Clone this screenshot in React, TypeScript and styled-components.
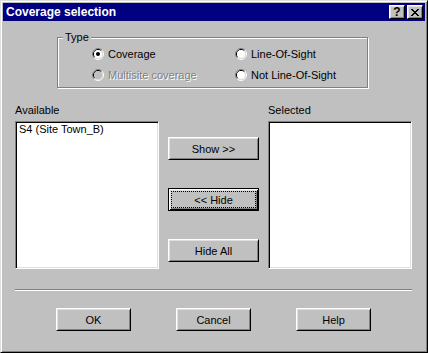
import React from 'react';
import styled, { createGlobalStyle, css } from 'styled-components';

const GlobalStyle = createGlobalStyle`
  html, body {
    margin: 0;
    padding: 0;
    background: #c0c0c0;
  }
  body {
    font-family: "Liberation Sans", Arial, sans-serif;
    font-size: 11px;
    color: #000;
  }
`;

const Window = styled.div`
  width: 428px;
  height: 353px;
  box-sizing: border-box;
  display: flex;
  flex-direction: column;
  background: #c0c0c0;
  border: 1px solid;
  border-color: #dfdfdf #000 #000 #dfdfdf;
  box-shadow: inset 1px 1px #fff, inset -1px -1px #808080;
  padding: 2px;
`;

const TitleBar = styled.div`
  height: 18px;
  display: flex;
  align-items: center;
  padding: 0 2px 0 3px;
  background: #000080;
  color: #fff;
  font-size: 12px;
  font-weight: bold;
`;

const Caption = styled.div`
  flex: 1;
  line-height: 18px;
  white-space: nowrap;
`;

const TitleButtons = styled.div`
  display: flex;
  gap: 2px;
`;

const TitleButton = styled.div`
  width: 16px;
  height: 14px;
  box-sizing: border-box;
  display: flex;
  align-items: center;
  justify-content: center;
  background: #c0c0c0;
  color: #000;
  border: 1px solid;
  border-color: #fff #000 #000 #fff;
  box-shadow: inset 1px 1px #dfdfdf, inset -1px -1px #808080;
  font-size: 12px;
  font-weight: bold;
  line-height: 1;
`;

const Body = styled.div`
  flex: 1;
  display: flex;
  flex-direction: column;
`;

const GroupBox = styled.fieldset`
  margin: 10px 0 0 54px;
  width: 311px;
  min-width: 0;
  box-sizing: border-box;
  padding: 0 0 2px;
  border: 1px solid #808080;
  box-shadow: inset 1px 1px #fff, 1px 1px #fff;
`;

const GroupTitle = styled.legend`
  margin-left: 5px;
  padding: 0 2px;
  line-height: 12px;
  background: #c0c0c0;
`;

const RadioGrid = styled.div`
  display: grid;
  grid-template-columns: 143px auto;
  grid-auto-rows: 21px;
  padding-left: 34px;
`;

const RadioItem = styled.label<{ $disabled?: boolean }>`
  display: flex;
  align-items: center;
  gap: 4px;
  white-space: nowrap;
  ${({ $disabled }) =>
    $disabled &&
    css`
      color: #808080;
      text-shadow: 1px 1px #fff;
    `}
`;

const ListsArea = styled.div`
  display: grid;
  grid-template-columns: 144px 91px 144px;
  grid-template-rows: 13px 148px;
  column-gap: 9px;
  row-gap: 4px;
  margin: 16px 0 0 12px;
`;

const FieldLabel = styled.div<{ $col: number }>`
  grid-row: 1;
  grid-column: ${({ $col }) => $col};
  line-height: 13px;
`;

const ListBox = styled.div<{ $col: number }>`
  grid-row: 2;
  grid-column: ${({ $col }) => $col};
  box-sizing: border-box;
  background: #fff;
  border: 1px solid;
  border-color: #808080 #fff #fff #808080;
  box-shadow: inset 1px 1px #000, inset -1px -1px #dfdfdf;
  padding: 1px 3px;
`;

const ListItem = styled.div`
  line-height: 13px;
  white-space: nowrap;
`;

const MoveButtons = styled.div`
  grid-row: 2;
  grid-column: 2;
  display: flex;
  flex-direction: column;
  padding-top: 16px;
  gap: 28px;
`;

const Separator = styled.div`
  height: 0;
  margin: 20px 13px 0 12px;
  border-top: 1px solid #808080;
  border-bottom: 1px solid #fff;
`;

const ButtonRow = styled.div`
  display: flex;
  gap: 45px;
  margin: 17px 0 0 53px;
`;

const PushButton = styled.button<{ $width: number; $default?: boolean }>`
  width: ${({ $width }) => $width}px;
  height: 23px;
  box-sizing: border-box;
  padding: 0;
  display: flex;
  align-items: stretch;
  background: #c0c0c0;
  color: #000;
  font-family: "Liberation Sans", Arial, sans-serif;
  font-size: 11px;
  border: 1px solid;
  border-color: #fff #000 #000 #fff;
  box-shadow: inset 1px 1px #dfdfdf, inset -1px -1px #808080;
  ${({ $default }) =>
    $default &&
    css`
      border-color: #000;
      box-shadow: inset 1px 1px #fff, inset -1px -1px #000, inset 2px 2px #dfdfdf, inset -2px -2px #808080;
    `}
`;

const ButtonLabel = styled.span<{ $focused?: boolean }>`
  flex: 1;
  margin: 2px;
  display: flex;
  align-items: center;
  justify-content: center;
  border: 1px dotted ${({ $focused }) => ($focused ? '#000' : 'transparent')};
`;

const Radio = ({ checked, disabled }: { checked?: boolean; disabled?: boolean }) => (
  <svg width="12" height="12" viewBox="0 0 12 12">
    <path d="M2.11 9.89 A5.5 5.5 0 0 1 9.89 2.11" stroke="#808080" fill="none" />
    <path d="M9.89 2.11 A5.5 5.5 0 0 1 2.11 9.89" stroke="#fff" fill="none" />
    <path d="M2.82 9.18 A4.5 4.5 0 0 1 9.18 2.82" stroke="#000" fill="none" />
    <path d="M9.18 2.82 A4.5 4.5 0 0 1 2.82 9.18" stroke="#dfdfdf" fill="none" />
    <circle cx="6" cy="6" r="4" fill={disabled ? '#c0c0c0' : '#fff'} />
    {checked && <circle cx="6" cy="6" r="2" fill="#000" />}
  </svg>
);

const closePixels = [
  [0, 0], [1, 0], [6, 0], [7, 0],
  [1, 1], [2, 1], [5, 1], [6, 1],
  [2, 2], [3, 2], [4, 2], [5, 2],
  [3, 3], [4, 3],
  [2, 4], [3, 4], [4, 4], [5, 4],
  [1, 5], [2, 5], [5, 5], [6, 5],
  [0, 6], [1, 6], [6, 6], [7, 6],
];

const CloseGlyph = () => (
  <svg width="8" height="7" viewBox="0 0 8 7" shapeRendering="crispEdges">
    {closePixels.map(([x, y]) => (
      <rect key={`${x}-${y}`} x={x} y={y} width="1" height="1" fill="#000" />
    ))}
  </svg>
);

const radios = [
  { label: 'Coverage', checked: true },
  { label: 'Line-Of-Sight' },
  { label: 'Multisite coverage', disabled: true },
  { label: 'Not Line-Of-Sight' },
];

export default function App() {
  return (
    <>
      <GlobalStyle />
      <Window>
        <TitleBar>
          <Caption>Coverage selection</Caption>
          <TitleButtons>
            <TitleButton>?</TitleButton>
            <TitleButton>
              <CloseGlyph />
            </TitleButton>
          </TitleButtons>
        </TitleBar>
        <Body>
          <GroupBox>
            <GroupTitle>Type</GroupTitle>
            <RadioGrid>
              {radios.map((r) => (
                <RadioItem key={r.label} $disabled={r.disabled}>
                  <Radio checked={r.checked} disabled={r.disabled} />
                  {r.label}
                </RadioItem>
              ))}
            </RadioGrid>
          </GroupBox>

          <ListsArea>
            <FieldLabel $col={1}>Available</FieldLabel>
            <FieldLabel $col={3}>Selected</FieldLabel>
            <ListBox $col={1}>
              <ListItem>S4 (Site Town_B)</ListItem>
            </ListBox>
            <MoveButtons>
              <PushButton $width={91}>
                <ButtonLabel>Show &gt;&gt;</ButtonLabel>
              </PushButton>
              <PushButton $width={91} $default>
                <ButtonLabel $focused>&lt;&lt; Hide</ButtonLabel>
              </PushButton>
              <PushButton $width={91}>
                <ButtonLabel>Hide All</ButtonLabel>
              </PushButton>
            </MoveButtons>
            <ListBox $col={3} />
          </ListsArea>

          <Separator />

          <ButtonRow>
            <PushButton $width={75}>
              <ButtonLabel>OK</ButtonLabel>
            </PushButton>
            <PushButton $width={75}>
              <ButtonLabel>Cancel</ButtonLabel>
            </PushButton>
            <PushButton $width={75}>
              <ButtonLabel>Help</ButtonLabel>
            </PushButton>
          </ButtonRow>
        </Body>
      </Window>
    </>
  );
}
